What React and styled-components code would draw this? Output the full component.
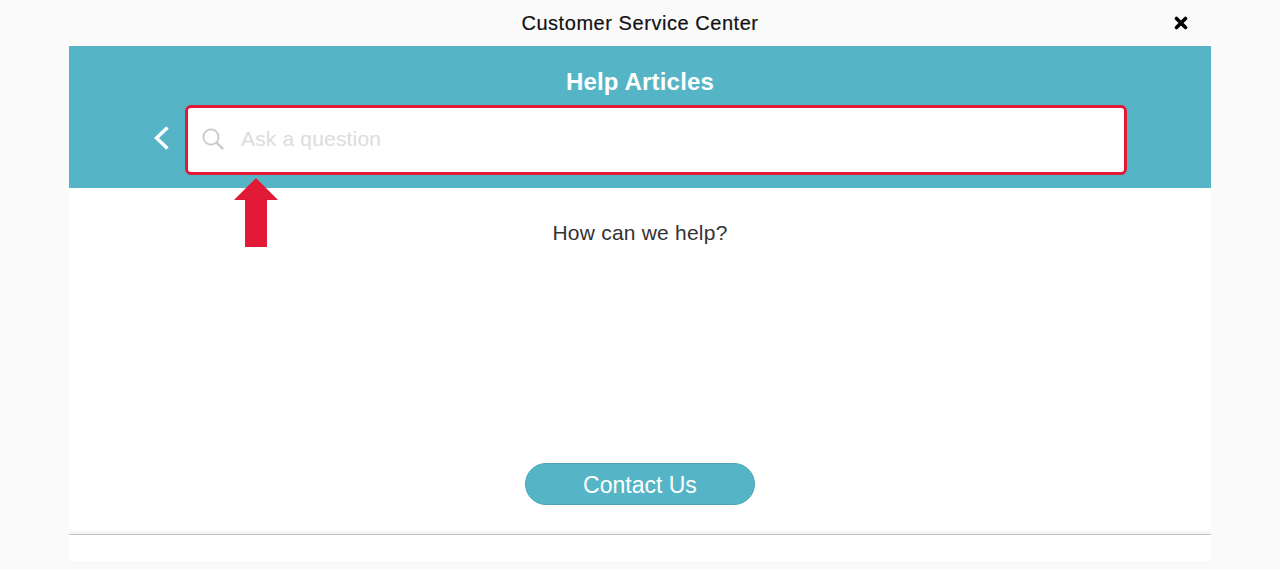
import React from "react";
import styled, { createGlobalStyle } from "styled-components";

const GlobalStyle = createGlobalStyle`
  html, body {
    margin: 0;
    padding: 0;
    background: #fafafa;
    font-family: "Liberation Sans", Arial, sans-serif;
  }
`;

const teal = "#55b5c6";
const red = "#e01a37";

const Page = styled.div`
  width: 1280px;
  height: 569px;
  overflow: hidden;
  display: flex;
  flex-direction: column;
`;

const TitleBar = styled.div`
  height: 46px;
  width: 1142px;
  margin: 0 auto;
  box-sizing: border-box;
  display: flex;
  align-items: center;
  justify-content: center;
  position: relative;
`;

const Title = styled.div`
  font-size: 20px;
  letter-spacing: 0.55px;
  color: #111;
  -webkit-text-stroke: 0.2px #111;
`;

const CloseButton = styled.div`
  position: absolute;
  left: 1105px;
  top: 16px;
  width: 14px;
  height: 14px;
  line-height: 0;
`;

const Panel = styled.div`
  width: 1142px;
  height: 515px;
  margin: 0 auto;
  background: #fff;
  display: flex;
  flex-direction: column;
  position: relative;
  overflow: hidden;
`;

const Banner = styled.div`
  height: 142px;
  background: ${teal};
  display: flex;
  flex-direction: column;
  align-items: center;
`;

const BannerTitle = styled.div`
  margin-top: 21px;
  height: 29px;
  line-height: 29px;
  font-size: 24px;
  font-weight: 700;
  letter-spacing: 0.17px;
  color: #fff;
`;

const SearchRow = styled.div`
  margin-top: 9px;
  width: 100%;
  display: flex;
  align-items: center;
  padding-left: 83px;
  box-sizing: border-box;
`;

const BackButton = styled.div`
  width: 33px;
  display: flex;
  line-height: 0;
  margin-top: -4px;
`;

const SearchBox = styled.div`
  width: 942px;
  height: 70px;
  box-sizing: border-box;
  background: #fff;
  border: 3px solid ${red};
  border-radius: 6px;
  display: flex;
  align-items: center;
  padding-left: 14px;
  padding-bottom: 3px;
  gap: 17px;
`;

const Placeholder = styled.span`
  font-size: 21px;
  letter-spacing: 0.17px;
  color: #dcdcdc;
`;

const Arrow = styled.div`
  position: absolute;
  left: 165px;
  top: 132px;
  line-height: 0;
`;

const Body = styled.div`
  flex: 1;
  display: flex;
  flex-direction: column;
  align-items: center;
`;

const Prompt = styled.div`
  margin-top: 33px;
  height: 24px;
  line-height: 24px;
  font-size: 21px;
  letter-spacing: 0.22px;
  color: #333;
`;

const ContactButton = styled.button`
  margin-top: auto;
  margin-bottom: 29px;
  width: 230px;
  height: 42px;
  padding: 2px 0 0;
  border: 1px solid #4aa5b6;
  border-radius: 21px;
  background: ${teal};
  color: #fff;
  font-family: "Liberation Sans", Arial, sans-serif;
  font-size: 23px;
`;

const Footer = styled.div`
  height: 27px;
  flex: none;
  box-sizing: border-box;
  border-top: 1px solid #c4c4c4;
  box-shadow: 0 -2px 4px rgba(0, 0, 0, 0.08);
  background: #fff;
`;

export default function App() {
  return (
    <Page>
      <GlobalStyle />
      <TitleBar>
        <Title>Customer Service Center</Title>
        <CloseButton>
          <svg width="14" height="14" viewBox="0 0 14 14">
            <path d="M2.5 2.5L11.5 11.5M11.5 2.5L2.5 11.5" stroke="#000" strokeWidth="3.6" strokeLinecap="round" />
          </svg>
        </CloseButton>
      </TitleBar>
      <Panel>
        <Banner>
          <BannerTitle>Help Articles</BannerTitle>
          <SearchRow>
            <BackButton>
              <svg width="18" height="26" viewBox="0 0 18 26">
                <path d="M15.5 2.5L4.5 13L15.5 23.5" fill="none" stroke="#fff" strokeWidth="3.4" />
              </svg>
            </BackButton>
            <SearchBox>
              <svg width="22" height="22" viewBox="0 0 22 22">
                <circle cx="9" cy="9" r="7.6" fill="none" stroke="#c9c9c9" strokeWidth="1.8" />
                <path d="M14.8 14.8L20.5 20.5" stroke="#c9c9c9" strokeWidth="2.4" strokeLinecap="round" />
              </svg>
              <Placeholder>Ask a question</Placeholder>
            </SearchBox>
          </SearchRow>
        </Banner>
        <Arrow>
          <svg width="44" height="69" viewBox="0 0 44 69">
            <path d="M22 0L44 22H33V69H11V22H0Z" fill={red} />
          </svg>
        </Arrow>
        <Body>
          <Prompt>How can we help?</Prompt>
          <ContactButton>Contact Us</ContactButton>
        </Body>
        <Footer />
      </Panel>
    </Page>
  );
}
